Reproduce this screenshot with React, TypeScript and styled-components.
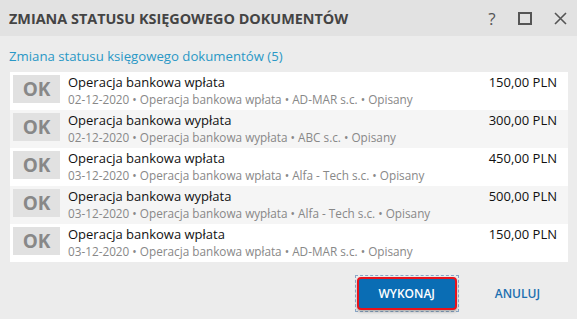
import { createGlobalStyle, styled } from "styled-components";

const GlobalStyle = createGlobalStyle`
    html, body {
        margin: 0;
        padding: 0;
        background: #ececec;
    }
    body {
        font-family: "Open Sans", "Noto Sans", sans-serif;
    }
`;

const Dialog = styled.div`
    width: 577px;
    height: 319px;
    display: flex;
    flex-direction: column;
    background: #ececec;
    overflow: hidden;
`;

const Header = styled.div`
    height: 36px;
    flex-shrink: 0;
    display: flex;
    align-items: center;
    justify-content: space-between;
    padding: 0 10px 0 9px;
    background: #e2e2e2;
`;

const Title = styled.h1`
    margin: 0;
    font-size: 14.4px;
    font-weight: 700;
    color: #444;
`;

const HeaderTools = styled.div`
    display: flex;
    align-items: center;
    gap: 22px;
    color: #555;
    svg {
        display: block;
    }
`;

const HelpMark = styled.span`
    font-size: 17px;
    color: #555;
    width: 8px;
    text-align: center;
`;

const Body = styled.div`
    flex: 1;
    display: flex;
    flex-direction: column;
    padding: 10px 9px 0 10px;
`;

const Subtitle = styled.div`
    font-size: 13.2px;
    color: #2a98c6;
    line-height: 18px;
    margin: 1px 0 7px -1px;
`;

const List = styled.div`
    background: #fff;
    display: flex;
    flex-direction: column;
`;

const Row = styled.div<{ $alt: boolean }>`
    height: 38px;
    display: flex;
    align-items: flex-start;
    padding: 3px 11px 0 3px;
    background: ${(p) => (p.$alt ? "#f5f5f5" : "#fff")};
    box-sizing: border-box;
`;

const Badge = styled.div`
    width: 47px;
    height: 28px;
    background: #e1e1e1;
    color: #888;
    font-size: 19px;
    font-weight: 700;
    display: flex;
    align-items: center;
    justify-content: center;
    flex-shrink: 0;
`;

const Info = styled.div`
    flex: 1;
    margin-left: 8px;
    display: flex;
    flex-direction: column;
`;

const ItemName = styled.div`
    font-size: 13px;
    color: #111;
    line-height: 17px;
    margin-top: -1px;
`;

const Meta = styled.div`
    font-size: 11.75px;
    color: #888;
    line-height: 16px;
`;

const Amount = styled.div`
    font-size: 13px;
    color: #111;
    line-height: 17px;
    margin-top: -1px;
`;

const Footer = styled.div`
    display: flex;
    align-items: center;
    justify-content: flex-end;
    padding: 13px 28px 0 0;
    gap: 36px;
`;

const FocusRing = styled.div`
    border: 1px dashed #8aa8c8;
    padding: 1px;
`;

const PrimaryButton = styled.button`
    width: 100px;
    height: 33px;
    border: 2px solid #e8121c;
    border-radius: 4px;
    background: #0a6db4;
    color: #fff;
    font-family: inherit;
    font-size: 12px;
    font-weight: 600;
    box-shadow: 0 2px 3px rgba(0, 0, 0, 0.25);
    display: block;
`;

const TextButton = styled.button`
    border: 0;
    background: transparent;
    color: #1b6fb0;
    font-family: inherit;
    font-size: 12px;
    font-weight: 600;
    padding: 0;
`;

const docs = [
    { name: "Operacja bankowa wpłata", date: "02-12-2020", party: "AD-MAR s.c.", amount: "150,00 PLN" },
    { name: "Operacja bankowa wypłata", date: "02-12-2020", party: "ABC s.c.", amount: "300,00 PLN" },
    { name: "Operacja bankowa wpłata", date: "03-12-2020", party: "Alfa - Tech s.c.", amount: "450,00 PLN" },
    { name: "Operacja bankowa wypłata", date: "03-12-2020", party: "Alfa - Tech s.c.", amount: "500,00 PLN" },
    { name: "Operacja bankowa wpłata", date: "03-12-2020", party: "AD-MAR s.c.", amount: "150,00 PLN" },
];

export default function App() {
    return (
        <>
            <GlobalStyle />
            <Dialog>
                <Header>
                    <Title>ZMIANA STATUSU KSIĘGOWEGO DOKUMENTÓW</Title>
                    <HeaderTools>
                        <HelpMark>?</HelpMark>
                        <svg width="14" height="13" viewBox="0 0 14 13">
                            <rect x="1" y="1" width="12" height="11" fill="none" stroke="#555" strokeWidth="2" />
                        </svg>
                        <svg width="13" height="13" viewBox="0 0 13 13">
                            <path d="M1 1 L12 12 M12 1 L1 12" stroke="#555" strokeWidth="1.6" />
                        </svg>
                    </HeaderTools>
                </Header>
                <Body>
                    <Subtitle>Zmiana statusu księgowego dokumentów ({docs.length})</Subtitle>
                    <List>
                        {docs.map((d, i) => (
                            <Row key={i} $alt={i % 2 === 1}>
                                <Badge>OK</Badge>
                                <Info>
                                    <ItemName>{d.name}</ItemName>
                                    <Meta>
                                        {d.date} • {d.name} • {d.party} • Opisany
                                    </Meta>
                                </Info>
                                <Amount>{d.amount}</Amount>
                            </Row>
                        ))}
                    </List>
                    <Footer>
                        <FocusRing>
                            <PrimaryButton>WYKONAJ</PrimaryButton>
                        </FocusRing>
                        <TextButton>ANULUJ</TextButton>
                    </Footer>
                </Body>
            </Dialog>
        </>
    );
}
